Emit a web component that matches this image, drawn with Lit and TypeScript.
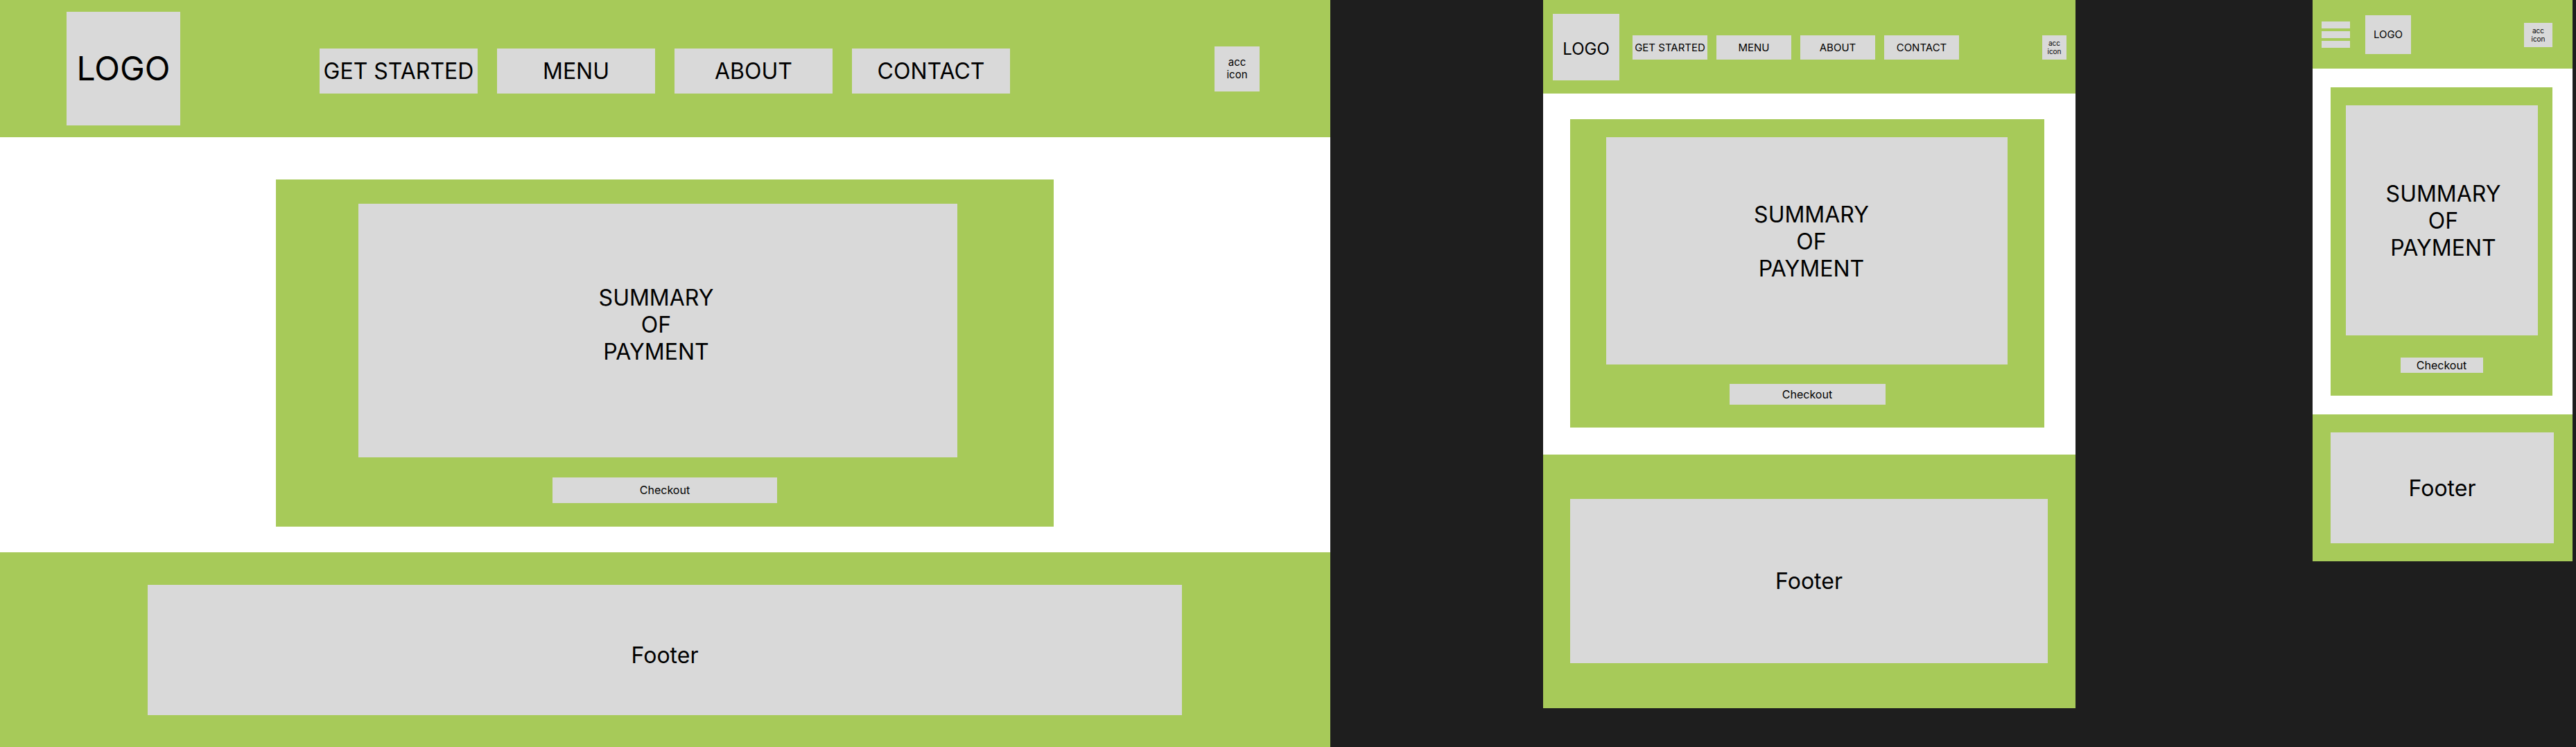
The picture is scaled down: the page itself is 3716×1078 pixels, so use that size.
import { LitElement, html, css, nothing } from "lit";
import { customElement, property } from "lit/decorators.js";

const NAV_ITEMS = ["GET STARTED", "MENU", "ABOUT", "CONTACT"];

type Variant = "desktop" | "tablet" | "mobile";

/** One wireframe of the checkout page, drawn at a given breakpoint. */
@customElement("checkout-frame")
export class CheckoutFrame extends LitElement {
  @property({ reflect: true }) variant: Variant = "desktop";

  static styles = css`
    :host {
      display: block;
      min-width: 0;
      background: #ffffff;
      color: #000000;
      font-family: Inter, "Liberation Sans", sans-serif;
      --green: #a7ca59;
      --grey: #d9d9d9;
    }

    :host([variant="desktop"]) {
      --header-pad: 17px 102px 17px 96px;
      --logo-width: 164px;
      --logo-height: 164px;
      --logo-pad: 0;
      --logo-font: 48px;
      --logo-line: 58px;
      --nav-gap: 28px;
      --nav-margin: 201px;
      --nav-pad: 7px;
      --item-width: 228px;
      --item-height: 65px;
      --item-font: 32px;
      --item-line: 39px;
      --acc-width: 65px;
      --acc-height: 65px;
      --acc-font: 15px;
      --acc-line: 18px;
      --main-columns: 398fr 1122fr 399fr;
      --main-pad: 61px 0 37px;
      --card-columns: 119fr 864fr 139fr;
      --card-pad: 35px 0 34px;
      --card-gap: 29px;
      --summary-height: 366px;
      --summary-pad: 0 5px 18px 0;
      --button-width: 324px;
      --button-height: 37px;
      --footer-columns: 213fr 1492fr 214fr;
      --footer-pad: 47px 0 46px;
      --footer-height: 188px;
      --footer-text-pad: 14px;
    }

    :host([variant="tablet"]) {
      --header-pad: 20px 13px 19px 14px;
      --logo-width: 96px;
      --logo-height: 96px;
      --logo-pad: 4px;
      --logo-font: 24px;
      --logo-line: 29px;
      --nav-gap: 13px;
      --nav-margin: 19px;
      --nav-pad: 1px;
      --item-width: 108px;
      --item-height: 35px;
      --item-font: 15px;
      --item-line: 18px;
      --acc-width: 35px;
      --acc-height: 35px;
      --acc-font: 10px;
      --acc-line: 12px;
      --main-columns: 39fr 684fr 45fr;
      --main-pad: 37px 0 39px;
      --card-columns: 52fr 579fr 53fr;
      --card-pad: 26px 0 33px;
      --card-gap: 28px;
      --summary-height: 328px;
      --summary-pad: 0 0 27px 13px;
      --button-width: 225px;
      --button-height: 30px;
      --footer-columns: 39fr 689fr 40fr;
      --footer-pad: 64px 0 65px;
      --footer-height: 237px;
      --footer-text-pad: 0;
    }

    :host([variant="mobile"]) {
      --header-pad: 22px 29px 21px 13px;
      --logo-width: 66px;
      --logo-height: 56px;
      --logo-pad: 0;
      --logo-font: 15px;
      --logo-line: 18px;
      --acc-width: 41px;
      --acc-height: 35px;
      --acc-font: 10px;
      --acc-line: 12px;
      --main-columns: 26fr 320fr 29fr;
      --main-pad: 27px 0 27px;
      --card-columns: 22fr 277fr 21fr;
      --card-pad: 26px 0 33px;
      --card-gap: 32px;
      --summary-height: 332px;
      --summary-pad: 0 0 0 4px;
      --button-width: 119px;
      --button-height: 22px;
      --footer-columns: 26fr 322fr 27fr;
      --footer-pad: 26px 0 26px;
      --footer-height: 160px;
      --footer-text-pad: 0;
    }

    a,
    button {
      box-sizing: border-box;
      margin: 0;
      padding: 0;
      border: 0;
      color: inherit;
      font-family: inherit;
      text-decoration: none;
      cursor: pointer;
    }

    .header {
      display: flex;
      align-items: center;
      padding: var(--header-pad);
      background: var(--green);
    }

    .burger {
      display: flex;
      flex-direction: column;
      gap: 4px;
      width: 41px;
      margin-right: 22px;
      background: none;
    }

    .bar {
      height: 10px;
      background: var(--grey);
    }

    .logo {
      display: flex;
      flex: none;
      align-items: center;
      justify-content: center;
      width: var(--logo-width);
      height: var(--logo-height);
      padding-top: var(--logo-pad);
      background: var(--grey);
      font-size: var(--logo-font);
      line-height: var(--logo-line);
    }

    .nav {
      display: flex;
      gap: var(--nav-gap);
      margin-left: var(--nav-margin);
      padding-top: var(--nav-pad);
    }

    .item {
      display: flex;
      align-items: center;
      justify-content: center;
      width: var(--item-width);
      height: var(--item-height);
      background: var(--grey);
      font-size: var(--item-font);
      line-height: var(--item-line);
      white-space: nowrap;
    }

    .account {
      flex: none;
      width: var(--acc-width);
      height: var(--acc-height);
      margin-left: auto;
      background: var(--grey);
      font-size: var(--acc-font);
      line-height: var(--acc-line);
      text-align: center;
    }

    .main {
      display: grid;
      grid-template-columns: var(--main-columns);
      padding: var(--main-pad);
    }

    .card {
      display: grid;
      grid-column: 2;
      grid-template-columns: var(--card-columns);
      row-gap: var(--card-gap);
      padding: var(--card-pad);
      background: var(--green);
    }

    .summary {
      box-sizing: border-box;
      display: flex;
      grid-column: 2;
      align-items: center;
      justify-content: center;
      min-height: var(--summary-height);
      margin: 0;
      padding: var(--summary-pad);
      background: var(--grey);
      font-size: 32px;
      font-weight: 400;
      line-height: 39px;
      text-align: center;
    }

    .checkout {
      grid-column: 1 / -1;
      justify-self: center;
      width: var(--button-width);
      height: var(--button-height);
      background: var(--grey);
      font-size: 16px;
      line-height: 19px;
    }

    .footer {
      display: grid;
      grid-template-columns: var(--footer-columns);
      padding: var(--footer-pad);
      background: var(--green);
    }

    .footer-box {
      box-sizing: border-box;
      display: flex;
      grid-column: 2;
      align-items: center;
      justify-content: center;
      min-height: var(--footer-height);
      padding-top: var(--footer-text-pad);
      background: var(--grey);
      font-size: 32px;
      line-height: 39px;
    }
  `;

  private renderNav() {
    return html`
      <nav class="nav">
        ${NAV_ITEMS.map((item) => html`<a class="item" href="#">${item}</a>`)}
      </nav>
    `;
  }

  private renderBurger() {
    return html`
      <button class="burger" type="button" aria-label="Menu">
        <span class="bar"></span>
        <span class="bar"></span>
        <span class="bar"></span>
      </button>
    `;
  }

  render() {
    const mobile = this.variant === "mobile";
    return html`
      <header class="header">
        ${mobile ? this.renderBurger() : nothing}
        <a class="logo" href="#">LOGO</a>
        ${mobile ? nothing : this.renderNav()}
        <button class="account" type="button">acc<br />icon</button>
      </header>
      <main class="main">
        <section class="card">
          <h1 class="summary">SUMMARY<br />OF<br />PAYMENT</h1>
          <button class="checkout" type="button">Checkout</button>
        </section>
      </main>
      <footer class="footer">
        <div class="footer-box">Footer</div>
      </footer>
    `;
  }
}

/** Dark canvas with the three breakpoints side by side. */
@customElement("app-root")
export class AppRoot extends LitElement {
  static styles = css`
    :host {
      display: grid;
      grid-template-columns: 1919fr 307fr 768fr 342fr 375fr 5fr;
      align-items: start;
      min-height: 100vh;
      background: #1e1e1e;
    }

    .desktop {
      grid-column: 1;
    }

    .tablet {
      grid-column: 3;
    }

    .mobile {
      grid-column: 5;
    }
  `;

  render() {
    return html`
      <checkout-frame class="desktop" variant="desktop"></checkout-frame>
      <checkout-frame class="tablet" variant="tablet"></checkout-frame>
      <checkout-frame class="mobile" variant="mobile"></checkout-frame>
    `;
  }
}
